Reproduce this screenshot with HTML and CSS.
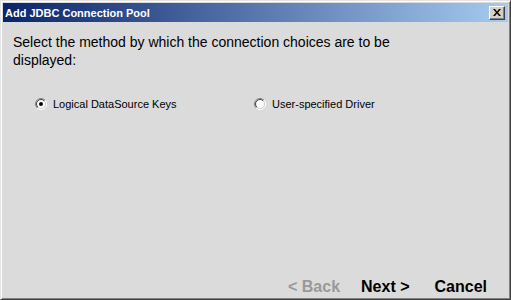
FILE: index.html
```html
<!DOCTYPE html>
<html lang="en">
<head>
    <meta charset="UTF-8">
    <meta name="viewport" content="width=device-width, initial-scale=1.0">
    <title>Add JDBC Connection Pool</title>
    <link rel="stylesheet" href="styles.css">
</head>

<body>
    <div class="dialog">
        <!-- Barra del titolo -->
        <div class="title-bar">
            <span class="title-text">Add JDBC Connection Pool</span>
            <button class="close-btn" aria-label="Close">
                <svg width="8" height="7" viewBox="0 0 8 7">
                    <path d="M0 0 L2 0 L4 2.5 L6 0 L8 0 L5 3.5 L8 7 L6 7 L4 4.5 L2 7 L0 7 L3 3.5 Z" fill="#000"/>
                </svg>
            </button>
        </div>

        <div class="dialog-body">
            <p class="intro">Select the method by which the connection choices are to be displayed:</p>

            <div class="choices">
                <label class="choice">
                    <svg class="radio" width="12" height="12" viewBox="0 0 12 12">
                        <defs>
                            <linearGradient id="outerEdge" x1="0" y1="0" x2="1" y2="1">
                                <stop offset="50%" stop-color="#808080"/>
                                <stop offset="50%" stop-color="#ffffff"/>
                            </linearGradient>
                            <linearGradient id="innerEdge" x1="0" y1="0" x2="1" y2="1">
                                <stop offset="50%" stop-color="#404040"/>
                                <stop offset="50%" stop-color="#d4d0c8"/>
                            </linearGradient>
                        </defs>
                        <circle cx="6" cy="6" r="5.5" fill="none" stroke="url(#outerEdge)"/>
                        <circle cx="6" cy="6" r="4.5" fill="#fff" stroke="url(#innerEdge)"/>
                        <circle cx="6" cy="6" r="2" fill="#000"/>
                    </svg>
                    <span>Logical DataSource Keys</span>
                </label>
                <label class="choice">
                    <svg class="radio" width="12" height="12" viewBox="0 0 12 12">
                        <circle cx="6" cy="6" r="5.5" fill="none" stroke="url(#outerEdge)"/>
                        <circle cx="6" cy="6" r="4.5" fill="#fff" stroke="url(#innerEdge)"/>
                    </svg>
                    <span>User-specified Driver</span>
                </label>
            </div>

            <!-- Pulsanti del wizard -->
            <div class="wizard-buttons">
                <span class="wizard-btn disabled">&lt; Back</span>
                <span class="wizard-btn next">Next &gt;</span>
                <span class="wizard-btn cancel">Cancel</span>
            </div>
        </div>
    </div>
</body>
</html>
```

FILE: styles.css
```css
body {
    margin: 0;
    padding: 0;
    font-family: 'Liberation Sans', Arial, sans-serif;
    color: #000;
}

.dialog {
    width: 511px;
    height: 300px;
    box-sizing: border-box;
    display: flex;
    flex-direction: column;
    background-color: #dbdbdb;
    border: 1px solid;
    border-color: #e4e4e4 #404040 #404040 #e4e4e4;
    box-shadow: inset 1px 1px 0 #ffffff, inset -1px -1px 0 #808080;
    padding: 2px;
}

.title-bar {
    height: 19px;
    display: flex;
    align-items: center;
    justify-content: space-between;
    padding: 0 3px 0 2px;
    background: linear-gradient(to right, #0a246a, #a6caf0);
}

.title-text {
    color: #fff;
    font-size: 11px;
    font-weight: bold;
}

.close-btn {
    width: 16px;
    height: 14px;
    padding: 0;
    display: flex;
    align-items: center;
    justify-content: center;
    background-color: #d4d0c8;
    border: 1px solid;
    border-color: #ffffff #404040 #404040 #ffffff;
    box-shadow: inset -1px -1px 0 #808080;
}

.dialog-body {
    flex: 1;
    display: flex;
    flex-direction: column;
}

.intro {
    max-width: 440px;
    margin: 11px 0 0 0;
    padding: 0 0 0 10px;
    font-size: 14px;
    line-height: 18px;
}

.choices {
    display: grid;
    grid-template-columns: 219px 1fr;
    margin: 28px 0 0 32px;
}

.choice {
    display: flex;
    align-items: center;
    gap: 6px;
    font-size: 11px;
    line-height: 14px;
}

.wizard-buttons {
    margin-top: auto;
    display: flex;
    justify-content: flex-end;
    padding: 0 21px 1px 0;
}

.wizard-btn {
    font-size: 16px;
    font-weight: bold;
    line-height: 18px;
}

.wizard-btn.disabled {
    color: #999;
}

.wizard-btn.next {
    margin-left: 21px;
}

.wizard-btn.cancel {
    margin-left: 25px;
}
```
